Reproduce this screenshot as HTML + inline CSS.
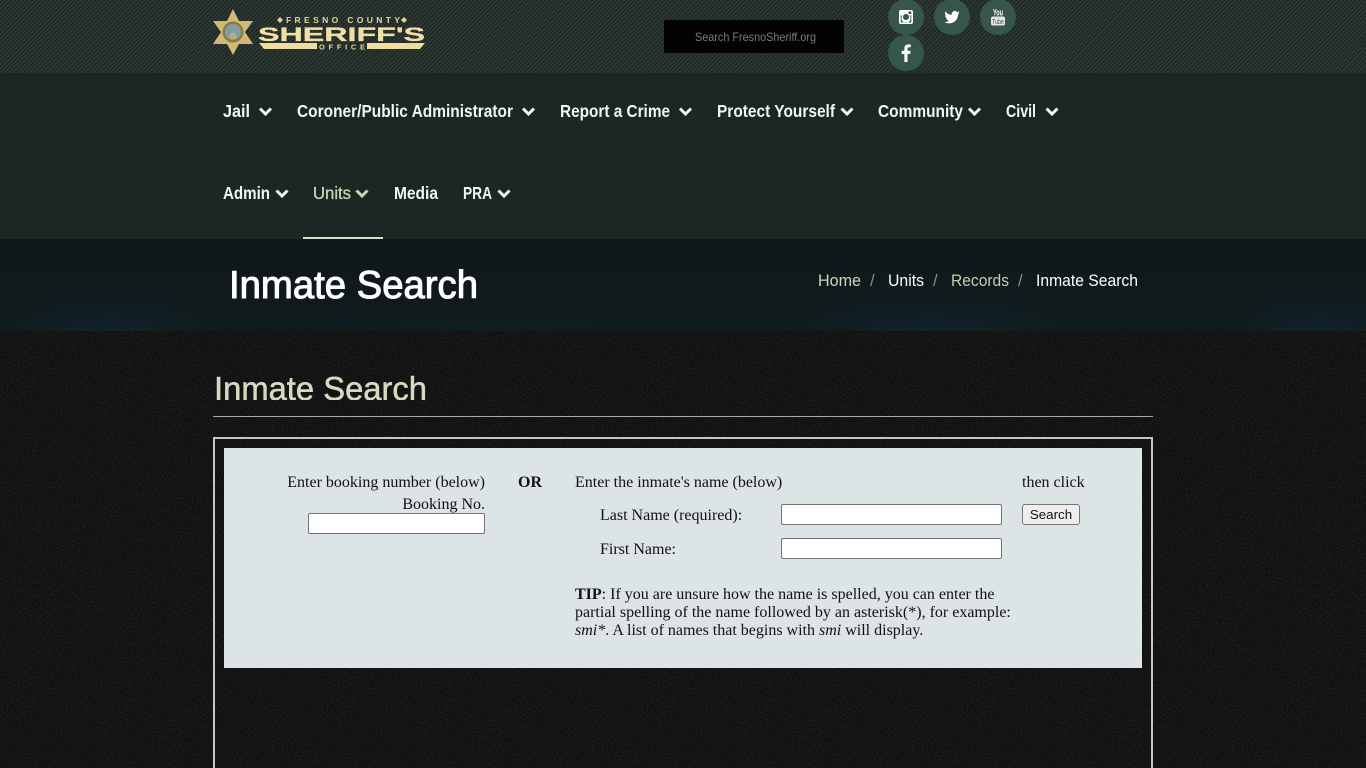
<!DOCTYPE html>
<html lang="en"><head><meta charset="utf-8"><title>Inmate Search</title>
<style>
html,body{margin:0;padding:0;width:1366px;height:768px;overflow:hidden;background:#101010}
body{position:relative;font-family:"Liberation Serif",serif;font-size:16px;color:#111}
.abs{position:absolute}
#body{left:0;top:331px;width:1366px;height:437px;background:#0f0f0f}
#top{left:0;top:0;width:1366px;height:73px;background:repeating-linear-gradient(135deg,#343f3b 0 1px,#1f2926 1px 3px)}
#nav{left:0;top:73px;width:1366px;height:166px;background:#1c2623}
#hero{left:0;top:239px;width:1366px;height:92px;background:
radial-gradient(ellipse 120px 40px at 110px 100%,rgba(20,60,75,.25),transparent),
radial-gradient(ellipse 160px 40px at 930px 100%,rgba(20,60,75,.25),transparent),
radial-gradient(ellipse 100px 40px at 1320px 100%,rgba(20,60,75,.25),transparent),
radial-gradient(ellipse 220px 30px at 500px 100%,rgba(20,50,60,.15),transparent),
linear-gradient(#0f191b,#101a1d)}
#rule{left:213px;top:416px;width:940px;height:1px;background:#a9aca6}
#box{left:213px;top:437px;width:936px;height:340px;border:2px solid #c4c6c4}
#panel{left:224px;top:448px;width:918px;height:220px;background:#dce4e6}
.t{position:absolute;line-height:18px;white-space:nowrap;color:#111}
input,button{position:absolute;box-sizing:border-box;margin:0}
input{background:#fff;border:1px solid #767676;border-radius:2px;height:21px;padding:1px 2px}
button{left:1022px;top:504px;width:58px;height:21px;background:#efefef;border:1px solid #767676;border-radius:3px;font:13.33px "Liberation Sans",sans-serif;color:#111;padding:0}
svg{position:absolute;left:0;top:0}
</style></head><body>
<div class="abs" id="body"></div>
<svg width="1366" height="437" style="top:331px">
 <filter id="n" x="0" y="0" width="100%" height="100%"><feTurbulence type="fractalNoise" baseFrequency=".8 .8" numOctaves="2" seed="4"/><feColorMatrix values="0 0 0 0 1  0 0 0 0 1  0 0 0 0 1  .9 0 0 0 -.38"/></filter>
 <rect width="1366" height="437" filter="url(#n)" opacity=".28"/>
</svg>
<div class="abs" id="top"></div>
<div class="abs" id="nav"></div>
<div class="abs" id="hero"></div>
<div class="abs" id="rule"></div>
<div class="abs" id="box"></div>
<div class="abs" id="panel"></div>

<svg width="1366" height="400" viewBox="0 0 1366 400" font-family="Liberation Sans, sans-serif">
 <!-- logo -->
 <polygon points="233,9 239,21 253,21 245,32 253,44 239,44 233,55 227,44 213,44 221,32 213,21 227,21" fill="#d2b873"/>
 <circle cx="233" cy="32" r="10.500" fill="#8a7a48"/>
 <circle cx="233" cy="32" r="8" fill="#7f9ea6"/>
 <circle cx="233" cy="36" r="3.500" fill="#b8ad7c"/>
 <text x="286" y="23" font-size="8.500" font-weight="700" fill="#e8d49a" textLength="114" lengthAdjust="spacing">FRESNO COUNTY</text>
 <polygon points="280,17 283,20 280,23 277,20" fill="#e8d49a"/><polygon points="404,17 407,20 404,23 401,20" fill="#e8d49a"/>
 <text x="258" y="41" font-size="19.500" font-weight="700" fill="#f3dfa6" stroke="#f3dfa6" stroke-width=".3" textLength="167" lengthAdjust="spacingAndGlyphs">SHERIFF'S</text>
 <polygon points="259,43 317,43 317,49 264,49" fill="#f0dca0"/><polygon points="367,43 425,43 420,49 367,49" fill="#f0dca0"/>
 <text x="319" y="49.500" font-size="7.500" font-weight="700" fill="#e8d49a" textLength="46" lengthAdjust="spacing">OFFICE</text>

 <!-- search -->
 <rect x="664" y="20" width="180" height="33" fill="#030303"/>
 <text x="695" y="41" font-size="12" fill="#7c7c7c" textLength="121" lengthAdjust="spacingAndGlyphs">Search FresnoSheriff.org</text>

 <!-- social -->
 <circle cx="906" cy="17" r="18" fill="#37564b"/><circle cx="952" cy="17" r="18" fill="#37564b"/><circle cx="998" cy="17" r="18" fill="#37564b"/><circle cx="906" cy="53" r="18" fill="#37564b"/>
 <path fill="#fff" fill-rule="evenodd" d="M901 10h10a2 2 0 0 1 2 2v10a2 2 0 0 1-2 2h-10a2 2 0 0 1-2-2v-10a2 2 0 0 1 2-2zM900.700 15.500v6.300a.7.7 0 0 0 .7.7h9.200a.7.7 0 0 0 .7-.7v-6.300h-1.700a4.600 4.600 0 1 1-7.200 0zM906 14a3 3 0 1 0 .01 0zM908.500 11.500v2.500h2.800v-2.500z"/>
 <path fill="#fff" d="M959.500 12.400c-.6.300-1.200.4-1.800.5.600-.4 1.100-1 1.400-1.700-.6.400-1.300.6-2 .8a3.100 3.100 0 0 0-5.300 2.800c-2.600-.1-4.900-1.400-6.400-3.300-.8 1.500-.4 3.300 1 4.200-.5 0-1-.2-1.400-.4 0 1.500 1.100 2.800 2.500 3.100-.5.100-.9.100-1.400 0 .4 1.200 1.500 2.100 2.900 2.200-1.400 1.100-3.100 1.600-4.600 1.400 1.400.9 3 1.400 4.800 1.400 5.800 0 9-4.800 8.900-9.100.6-.5 1.100-1.100 1.400-1.900z"/>
 <text x="993" y="15.500" font-size="9.500" font-weight="700" fill="#fff" textLength="10" lengthAdjust="spacingAndGlyphs">You</text>
 <rect x="991" y="16.500" width="14" height="9" rx="2" fill="#e6e6e6"/>
 <text x="992" y="24" font-size="7.500" fill="#37564b" textLength="12" lengthAdjust="spacingAndGlyphs">Tube</text>
 <path fill="#fff" d="M907.500 62v-8h2.700l.4-3.200h-3.100v-2c0-.9.300-1.500 1.600-1.500h1.600v-2.800c-.3 0-1.300-.1-2.300-.1-2.400 0-4 1.400-4 4.100v2.300h-2.700V54h2.700v8z"/>

 <!-- nav -->
 <g font-size="17.500" font-weight="700" fill="#f4f6f1">
  <text x="223" y="117" textLength="27" lengthAdjust="spacingAndGlyphs">Jail</text>
  <text x="297" y="117" textLength="216" lengthAdjust="spacingAndGlyphs">Coroner/Public Administrator</text>
  <text x="560" y="117" textLength="110" lengthAdjust="spacingAndGlyphs">Report a Crime</text>
  <text x="717" y="117" textLength="118" lengthAdjust="spacingAndGlyphs">Protect Yourself</text>
  <text x="878" y="117" textLength="85" lengthAdjust="spacingAndGlyphs">Community</text>
  <text x="1006" y="117" textLength="30" lengthAdjust="spacingAndGlyphs">Civil</text>
  <text x="223" y="199" textLength="47" lengthAdjust="spacingAndGlyphs">Admin</text>
  <text x="313" y="199" textLength="38" lengthAdjust="spacingAndGlyphs" fill="#c9d5bb" font-weight="400" stroke="#c9d5bb" stroke-width=".3">Units</text>
  <text x="394" y="199" textLength="44" lengthAdjust="spacingAndGlyphs">Media</text>
  <text x="463" y="199" textLength="29" lengthAdjust="spacingAndGlyphs">PRA</text>
 </g>
 <g fill="none" stroke="#f4f6f1" stroke-width="3">
  <path d="M260 108.500l5.500 5.500 5.500-5.500M523 108.500l5.500 5.500 5.500-5.500M680 108.500l5.500 5.500 5.500-5.500M841.500 108.500l5.500 5.500 5.500-5.500M969 108.500l5.500 5.500 5.500-5.500M1046.500 108.500l5.500 5.500 5.500-5.500M276.500 190.500l5.500 5.500 5.500-5.500M498.500 190.500l5.500 5.500 5.500-5.500"/>
  <path stroke="#c9d5bb" d="M356.500 190.500l5.500 5.500 5.500-5.500"/>
 </g>
 <rect x="303" y="237" width="80" height="2" fill="#d8e0cc"/>

 <!-- headings -->
 <text x="229" y="298" font-size="39" fill="#fff" stroke="#fff" stroke-width="1" textLength="249" lengthAdjust="spacingAndGlyphs">Inmate Search</text>
 <text x="214" y="400" font-size="33" fill="#d3dcc0" stroke="#d3dcc0" stroke-width=".5" textLength="213" lengthAdjust="spacingAndGlyphs">Inmate Search</text>

 <!-- breadcrumb -->
 <g font-size="16.500">
  <text x="818" y="286" fill="#cdd8bf" textLength="43" lengthAdjust="spacingAndGlyphs">Home</text>
  <text x="870" y="286" fill="#8a9088">/</text>
  <text x="888" y="286" fill="#fff" textLength="36" lengthAdjust="spacingAndGlyphs">Units</text>
  <text x="933" y="286" fill="#8a9088">/</text>
  <text x="951" y="286" fill="#c2cdb2" textLength="58" lengthAdjust="spacingAndGlyphs">Records</text>
  <text x="1018" y="286" fill="#8a9088">/</text>
  <text x="1036" y="286" fill="#fff" textLength="102" lengthAdjust="spacingAndGlyphs">Inmate Search</text>
 </g>
</svg>

<div class="t" style="right:881px;top:474px">Enter booking number (below)</div>
<div class="t" style="right:881px;top:496px">Booking No.</div>
<input type="text" style="left:308px;top:513px;width:177px">
<div class="t" style="left:518px;top:474px"><b>OR</b></div>
<div class="t" style="left:575px;top:474px">Enter the inmate's name (below)</div>
<div class="t" style="left:1022px;top:474px">then click</div>
<div class="t" style="left:600px;top:507px">Last Name (required):</div>
<input type="text" style="left:781px;top:504px;width:221px">
<button type="button">Search</button>
<div class="t" style="left:600px;top:541px">First Name:</div>
<input type="text" style="left:781px;top:538px;width:221px">
<div class="t" style="left:575px;top:586px"><b>TIP</b>: If you are unsure how the name is spelled, you can enter the<br>partial spelling of the name followed by an asterisk(*), for example:<br><i>smi*</i>. A list of names that begins with <i>smi</i> will display.</div>
</body></html>
